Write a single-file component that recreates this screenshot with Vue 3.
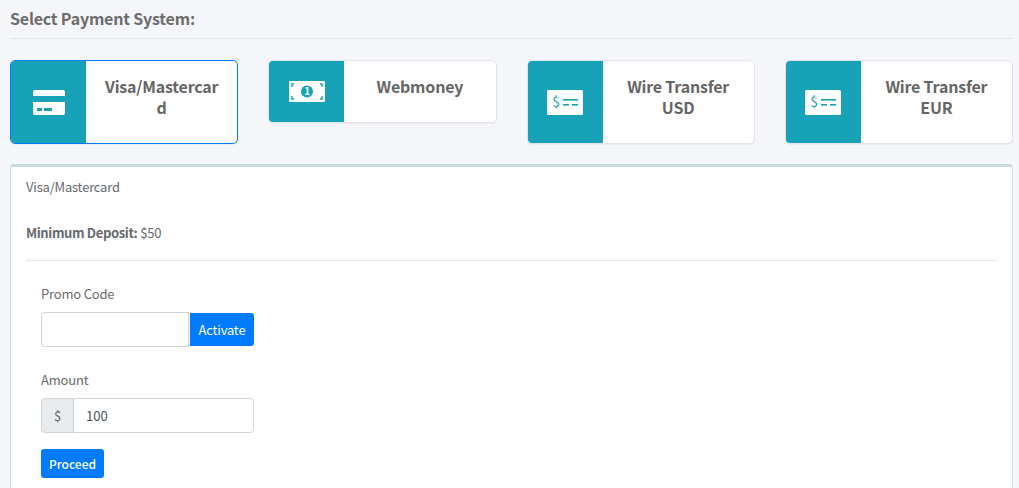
<template>
  <div class="page">
    <h1 class="page-title">Select Payment System:</h1>
    <hr class="title-rule" />

    <div class="systems">
      <div
        v-for="item in systems"
        :key="item.name"
        class="system-card"
        :class="{ active: item.active }"
      >
        <div class="system-icon">
          <svg v-if="item.icon === 'card'" width="32" height="25" viewBox="0 0 32 25">
            <path d="M2 0h28a2 2 0 0 1 2 2v4H0V2a2 2 0 0 1 2-2z" fill="#fff" />
            <path d="M0 12h32v11a2 2 0 0 1-2 2H2a2 2 0 0 1-2-2z" fill="#fff" />
            <rect x="4" y="18" width="5" height="3" fill="#17a2b8" />
            <rect x="11" y="18" width="8" height="3" fill="#17a2b8" />
          </svg>
          <svg v-else-if="item.icon === 'money'" width="36" height="21" viewBox="0 0 36 21">
            <rect width="36" height="21" rx="1" fill="#fff" />
            <circle cx="18" cy="10.5" r="6" fill="#17a2b8" />
            <text x="18" y="14" class="icon-digit">1</text>
            <path d="M3 6V3h2M31 3h2v3M3 15v3h2M31 18h2v-3" fill="none" stroke="#17a2b8" stroke-width="1.4" />
          </svg>
          <svg v-else width="36" height="25" viewBox="0 0 36 25">
            <rect width="36" height="25" rx="1.5" fill="#fff" />
            <text x="9" y="17" class="icon-dollar">$</text>
            <rect x="16" y="9" width="15" height="1.6" fill="#17a2b8" />
            <rect x="16" y="14" width="6" height="1.6" fill="#17a2b8" />
            <rect x="25" y="14" width="6" height="1.6" fill="#17a2b8" />
          </svg>
        </div>
        <div class="system-name">{{ item.name }}</div>
      </div>
    </div>

    <div class="panel">
      <div class="panel-name">Visa/Mastercard</div>
      <p class="min-deposit"><strong>Minimum Deposit:</strong> $50</p>
      <hr class="panel-rule" />

      <div class="form">
        <label class="field-label">Promo Code</label>
        <div class="promo-row">
          <input class="promo-input" type="text" />
          <button class="btn activate">Activate</button>
        </div>

        <label class="field-label amount-label">Amount</label>
        <div class="amount-row">
          <span class="amount-prefix">$</span>
          <input class="amount-input" type="text" v-model="amount" />
        </div>

        <button class="btn proceed">Proceed</button>
      </div>
    </div>
  </div>
</template>

<script setup>
import { ref } from 'vue'

const amount = ref('100')

const systems = [
  { name: 'Visa/Mastercard', icon: 'card', active: true },
  { name: 'Webmoney', icon: 'money' },
  { name: 'Wire Transfer USD', icon: 'wire' },
  { name: 'Wire Transfer EUR', icon: 'wire' }
]
</script>

<style>
html, body {
  margin: 0;
  height: 488px;
  overflow: hidden;
  background: #f4f6f9;
}
</style>

<style scoped>
.page {
  box-sizing: border-box;
  width: 1019px;
  padding: 7px 6px 0 10px;
  font-family: "Noto Sans CJK SC", "Noto Sans CJK JP", "Noto Sans", sans-serif;
  font-size: 13px;
  letter-spacing: -0.2px;
  color: #666a70;
}

.page-title {
  margin: 0;
  font-size: 16px;
  line-height: 22px;
  font-weight: 600;
  color: #6c6c6c;
}

.title-rule {
  margin: 9px 0 21px;
  border: 0;
  border-top: 1px solid #e3e6ea;
}

.systems {
  display: grid;
  grid-template-columns: repeat(4, 1fr);
  column-gap: 30px;
  align-items: start;
}

.system-card {
  display: flex;
  background: #fff;
  border: 1px solid #e1e4ea;
  border-radius: 5px;
  overflow: hidden;
  box-shadow: 0 1px 1px rgba(0, 0, 0, 0.05);
}

.system-card.active {
  border-color: #007bff;
}

.system-icon {
  flex: 0 0 75px;
  display: flex;
  align-items: center;
  justify-content: center;
  background: #17a2b8;
}

.system-name {
  flex: 1;
  min-width: 0;
  padding: 15px 15px 25px;
  font-size: 16px;
  line-height: 21px;
  font-weight: 600;
  text-align: center;
  color: #666;
  overflow-wrap: anywhere;
}

.icon-digit {
  font-size: 10px;
  font-weight: 700;
  text-anchor: middle;
  fill: #fff;
}

.icon-dollar {
  font-size: 14px;
  text-anchor: middle;
  fill: #17a2b8;
}

.panel {
  box-sizing: border-box;
  margin-top: 20px;
  height: 340px;
  padding: 11px 15px 0;
  background: #fff;
  border: 1px solid #d4dfe6;
  border-top: 3px solid #c9d9e2;
  border-radius: 4px;
}

.panel-name {
  line-height: 18px;
}

.min-deposit {
  margin: 28px 0 0;
  line-height: 18px;
}

.min-deposit strong {
  font-weight: 600;
  letter-spacing: -0.35px;
}

.panel-rule {
  margin: 18px 0 0;
  border: 0;
  border-top: 1px solid #e3e6ea;
}

.form {
  padding: 24px 15px 0;
}

.field-label {
  display: block;
  line-height: 18px;
  color: #6c6c6c;
}

.promo-row {
  display: flex;
  align-items: center;
  margin-top: 9px;
}

.promo-input {
  box-sizing: border-box;
  width: 148px;
  height: 35px;
  border: 1px solid #ced4da;
  border-radius: 4px 0 0 4px;
  background: #fff;
  outline: none;
}

.btn {
  border: 0;
  color: #fff;
  background: #007bff;
  font-family: inherit;
  font-size: 13px;
  letter-spacing: -0.2px;
  line-height: 18px;
  padding: 0;
}

.activate {
  width: 64px;
  height: 33px;
  margin-left: 1px;
  border-radius: 0 3px 3px 0;
}

.amount-label {
  margin-top: 24px;
}

.amount-row {
  display: flex;
  width: 213px;
  height: 35px;
  margin-top: 9px;
}

.amount-prefix {
  box-sizing: border-box;
  width: 33px;
  display: flex;
  align-items: center;
  justify-content: center;
  background: #e9ecef;
  border: 1px solid #ced4da;
  border-radius: 4px 0 0 4px;
}

.amount-input {
  box-sizing: border-box;
  flex: 1;
  min-width: 0;
  margin-left: -1px;
  padding: 0 12px;
  border: 1px solid #ced4da;
  border-radius: 0 4px 4px 0;
  font-family: inherit;
  font-size: 13px;
  color: #495057;
  outline: none;
}

.proceed {
  display: block;
  width: 63px;
  height: 29px;
  margin-top: 16px;
  border-radius: 3px;
  font-size: 12px;
  font-weight: 500;
  letter-spacing: 0;
}
</style>
